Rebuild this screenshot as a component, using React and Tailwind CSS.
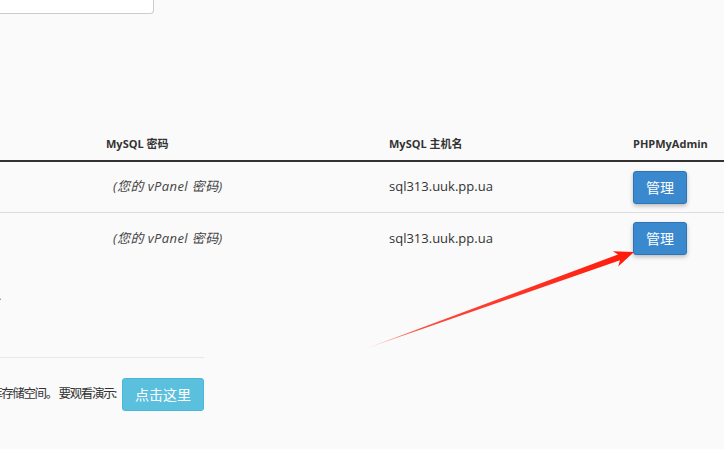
import React from 'react';

const font = { fontFamily: '"Open Sans", "Noto Sans CJK SC", sans-serif' };

const ManageButton = () => (
  <button className="w-[54px] h-[33px] rounded-[3px] bg-[#3a89cf] border border-[#2f74b5] text-white text-[14px] shadow-[0_2px_4px_rgba(0,0,0,0.25)]">
    管理
  </button>
);

const Row = ({ last }) => (
  <div className={`flex items-center h-[51px] ${last ? '' : 'border-b border-[#dddddd]'}`}>
    <div className="w-[389px] pl-[113px] italic text-[13px] tracking-[0.4px] text-[#444]">(您的 vPanel 密码)</div>
    <div className="w-[244px] text-[13px] text-[#333]">sql313.uuk.pp.ua</div>
    <div className="flex-1">
      <ManageButton />
    </div>
  </div>
);

const Arrow = () => (
  <svg className="absolute left-0 top-0 pointer-events-none" width="724" height="449">
    <defs>
      <linearGradient id="arrowFade" x1="367" y1="348" x2="634" y2="252" gradientUnits="userSpaceOnUse">
        <stop offset="0" stopColor="#ff2a1a" stopOpacity="0.2" />
        <stop offset="0.2" stopColor="#ff2a1a" stopOpacity="0.85" />
        <stop offset="1" stopColor="#ff1a0a" />
      </linearGradient>
    </defs>
    <polygon
      points="366,348.5 618,254.6 612.8,251.2 634,252 618.2,266.4 620,260.2"
      fill="url(#arrowFade)"
    />
  </svg>
);

export default function App() {
  return (
    <div className="relative w-[724px] h-[449px] overflow-hidden bg-[#fafafa]" style={font}>
      <div className="w-[154px] h-[14px] bg-white border-r border-b border-[#cccccc] rounded-br-[4px]" />

      <div className="mt-[114px] flex items-center h-[34px] border-b-2 border-[#333] text-[11px] font-bold text-[#333]">
        <div className="w-[389px] pl-[106px]">MySQL 密码</div>
        <div className="w-[244px]">MySQL 主机名</div>
        <div className="flex-1">PHPMyAdmin</div>
      </div>

      <Row />
      <Row last />

      <div className="mt-[25px] ml-[-8px] h-[14px] text-[12px] leading-[14px] text-[#555]">...</div>

      <div className="mt-[54px] w-[204px] border-t border-[#e8e8e8]" />

      <div className="mt-[20px] w-[204px] flex items-center justify-end">
        <span className="whitespace-nowrap text-[12.5px] tracking-[-1.4px] text-[#333]">数据库存储空间。 要观看演示:</span>
        <button className="ml-[6px] shrink-0 w-[82px] h-[33px] rounded-[3px] bg-[#5bc0de] border border-[#46b8da] text-white text-[14px]">
          点击这里
        </button>
      </div>

      <Arrow />
    </div>
  );
}
